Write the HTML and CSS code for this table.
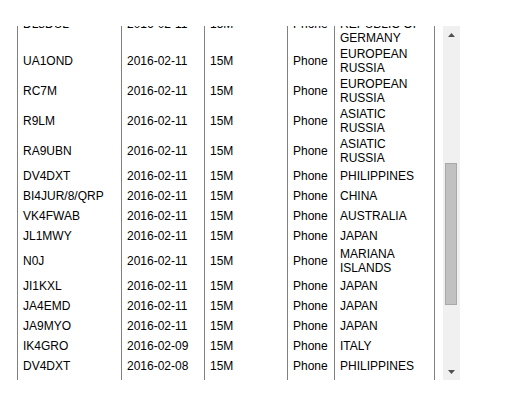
FILE: index.html
```html
<!DOCTYPE html>
<html>
<head>
<meta charset="utf-8">
<link rel="stylesheet" href="styles.css">
</head>
<body>
<div class="frame">
  <div class="viewport">
    <table class="log">
      <tbody>
        <tr><td>DL8DUL</td><td>2016-02-11</td><td>15M</td><td>Phone</td><td>FEDERAL REPUBLIC OF GERMANY</td></tr>
        <tr><td>UA1OND</td><td>2016-02-11</td><td>15M</td><td>Phone</td><td>EUROPEAN RUSSIA</td></tr>
        <tr><td>RC7M</td><td>2016-02-11</td><td>15M</td><td>Phone</td><td>EUROPEAN RUSSIA</td></tr>
        <tr><td>R9LM</td><td>2016-02-11</td><td>15M</td><td>Phone</td><td>ASIATIC RUSSIA</td></tr>
        <tr><td>RA9UBN</td><td>2016-02-11</td><td>15M</td><td>Phone</td><td>ASIATIC RUSSIA</td></tr>
        <tr><td>DV4DXT</td><td>2016-02-11</td><td>15M</td><td>Phone</td><td>PHILIPPINES</td></tr>
        <tr><td>BI4JUR/8/QRP</td><td>2016-02-11</td><td>15M</td><td>Phone</td><td>CHINA</td></tr>
        <tr><td>VK4FWAB</td><td>2016-02-11</td><td>15M</td><td>Phone</td><td>AUSTRALIA</td></tr>
        <tr><td>JL1MWY</td><td>2016-02-11</td><td>15M</td><td>Phone</td><td>JAPAN</td></tr>
        <tr><td>N0J</td><td>2016-02-11</td><td>15M</td><td>Phone</td><td>MARIANA ISLANDS</td></tr>
        <tr><td>JI1KXL</td><td>2016-02-11</td><td>15M</td><td>Phone</td><td>JAPAN</td></tr>
        <tr><td>JA4EMD</td><td>2016-02-11</td><td>15M</td><td>Phone</td><td>JAPAN</td></tr>
        <tr><td>JA9MYO</td><td>2016-02-11</td><td>15M</td><td>Phone</td><td>JAPAN</td></tr>
        <tr><td>IK4GRO</td><td>2016-02-09</td><td>15M</td><td>Phone</td><td>ITALY</td></tr>
        <tr><td>DV4DXT</td><td>2016-02-08</td><td>15M</td><td>Phone</td><td>PHILIPPINES</td></tr>
        <tr><td>JA1XYZ</td><td>2016-02-08</td><td>15M</td><td>Phone</td><td>JAPAN</td></tr>
        <tr><td>UA9XX</td><td>2016-02-07</td><td>15M</td><td>Phone</td><td>ASIATIC RUSSIA</td></tr>
      </tbody>
    </table>
  </div>
  <div class="scrollbar">
    <div class="sb-btn"><svg width="7" height="4" viewBox="0 0 7 4"><polygon points="0,4 7,4 3.5,0" fill="#505050"/></svg></div>
    <div class="sb-track"><div class="sb-thumb"></div></div>
    <div class="sb-btn"><svg width="7" height="4" viewBox="0 0 7 4"><polygon points="0,0 7,0 3.5,4" fill="#505050"/></svg></div>
  </div>
</div>
</body>
</html>
```

FILE: styles.css
```css
html, body {
  margin: 0;
  padding: 0;
  background: #ffffff;
}

body {
  font-family: "Liberation Sans", Arial, sans-serif;
  font-size: 12px;
  color: #000000;
}

.frame {
  display: flex;
  margin: 26px 0 0 8px;
  width: 452px;
  height: 354px;
}

.viewport {
  flex: 1;
  overflow: hidden;
  padding-left: 9px;
}

.log {
  margin-top: -24px;
  width: 418px;
  table-layout: fixed;
  border-collapse: separate;
  border-spacing: 0;
}

.log tr {
  height: 20px;
}

.log td {
  box-sizing: border-box;
  padding: 1px 5px;
  line-height: 14px;
  vertical-align: middle;
  border-left: 1px solid #808080;
  white-space: normal;
}

.log td:nth-child(1) { width: 104px; }
.log td:nth-child(2) { width: 83px; }
.log td:nth-child(3) { width: 83px; }
.log td:nth-child(4) { width: 47px; }
.log td:nth-child(5) {
  width: 101px;
  border-right: 1px solid #808080;
}

.scrollbar {
  width: 17px;
  background: #f0f0f0;
  display: flex;
  flex-direction: column;
}

.sb-btn {
  height: 17px;
  display: flex;
  align-items: center;
  justify-content: center;
}

.sb-btn svg {
  display: block;
}

.sb-track {
  flex: 1;
}

.sb-thumb {
  box-sizing: border-box;
  margin: 120px 0 0 2px;
  width: 12px;
  height: 142px;
  background: #c1c1c1;
  border: 1px solid #a8a8a8;
}
```
